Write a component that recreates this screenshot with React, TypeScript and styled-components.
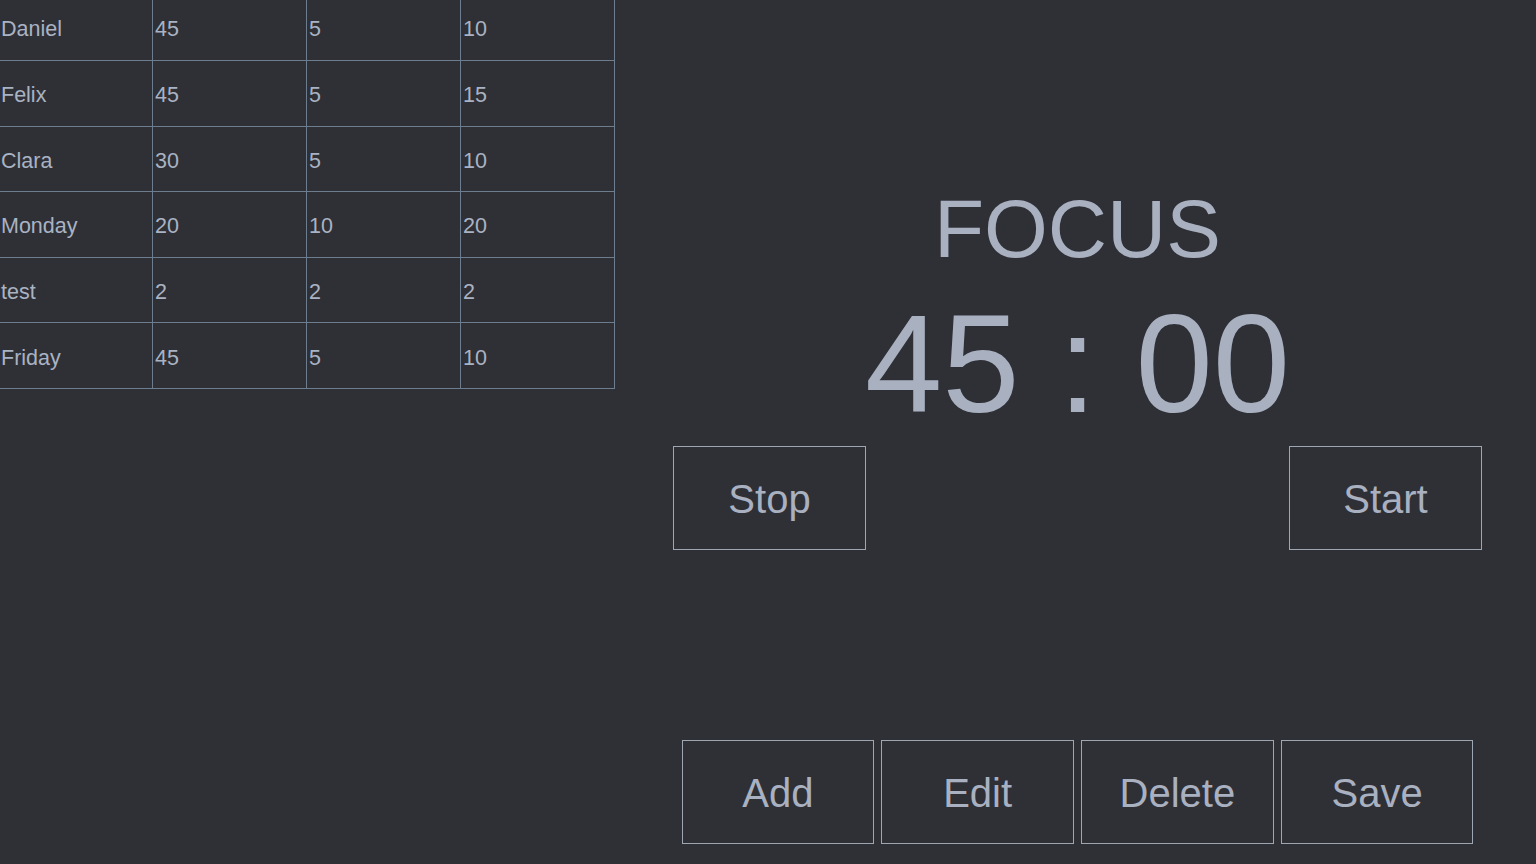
import React from "react";
import styled, { createGlobalStyle } from "styled-components";

const GlobalStyle = createGlobalStyle`
  html, body {
    margin: 0;
    padding: 0;
    background: #2f3036;
    overflow: hidden;
  }
  * { box-sizing: border-box; }
`;

const Page = styled.div`
  display: flex;
  width: 100vw;
  height: 100vh;
  background: #2f3036;
  font-family: "Liberation Sans", Arial, sans-serif;
  color: #a9b1c1;
`;

const LeftPane = styled.div`
  width: 616px;
  flex: none;
  overflow: hidden;
`;

const Table = styled.div`
  display: grid;
  grid-template-columns: 153px 154px 154px 154px;
`;

const Cell = styled.div<{ $first?: boolean; $top?: boolean }>`
  height: ${(p) => (p.$top ? "61px" : "65.6px")};
  display: flex;
  align-items: center;
  padding-left: ${(p) => (p.$first ? "1px" : "2px")};
  padding-top: ${(p) => (p.$top ? "0" : "5px")};
  padding-bottom: ${(p) => (p.$top ? "2px" : "0")};
  border-right: 1px solid #6e7d8d;
  border-bottom: 1px solid #6e7d8d;
  font-size: 21.5px;
  color: #a9b3c3;
  white-space: nowrap;
`;

const RightPane = styled.div`
  flex: 1;
  display: flex;
  flex-direction: column;
  align-items: center;
  padding: 188px 54px 20px 57px;
`;

const Mode = styled.div`
  font-size: 82px;
  line-height: 1;
  height: 82px;
`;

const Time = styled.div`
  margin-top: 24px;
  font-size: 139px;
  line-height: 1;
  height: 139px;
  white-space: pre;
`;

const ControlRow = styled.div<{ $spread?: boolean }>`
  display: flex;
  width: 100%;
  justify-content: ${(p) => (p.$spread ? "space-between" : "center")};
  gap: 7.5px;
  margin-top: ${(p) => (p.$spread ? "13px" : "auto")};
`;

const Button = styled.button<{ $narrow?: boolean }>`
  width: ${(p) => (p.$narrow ? "192.3px" : "193px")};
  height: 104px;
  flex: none;
  background: transparent;
  border: 1px solid #9ea6b2;
  border-radius: 0;
  color: #a9b1c1;
  font-family: "Liberation Sans", Arial, sans-serif;
  font-size: 40px;
  padding: 3px 0 0;
  cursor: pointer;
`;

const rows = [
  ["Daniel", "45", "5", "10"],
  ["Felix", "45", "5", "15"],
  ["Clara", "30", "5", "10"],
  ["Monday", "20", "10", "20"],
  ["test", "2", "2", "2"],
  ["Friday", "45", "5", "10"],
];

export default function App() {
  return (
    <>
      <GlobalStyle />
      <Page>
        <LeftPane>
          <Table>
            {rows.map((r, i) =>
              r.map((c, j) => (
                <Cell key={`${i}-${j}`} $first={j === 0} $top={i === 0}>
                  {c}
                </Cell>
              ))
            )}
          </Table>
        </LeftPane>
        <RightPane>
          <Mode>FOCUS</Mode>
          <Time>45 : 00</Time>
          <ControlRow $spread>
            <Button>Stop</Button>
            <Button>Start</Button>
          </ControlRow>
          <ControlRow>
            <Button $narrow>Add</Button>
            <Button $narrow>Edit</Button>
            <Button $narrow>Delete</Button>
            <Button $narrow>Save</Button>
          </ControlRow>
        </RightPane>
      </Page>
    </>
  );
}
